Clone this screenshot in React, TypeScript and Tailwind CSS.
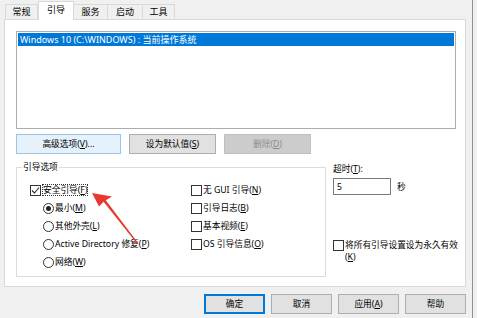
import type { ReactNode } from "react";

function Key({ k }: { k: string }) {
  return <span className="underline">{k}</span>;
}

function Box({ checked = false }: { checked?: boolean }) {
  return (
    <span className="mr-px flex h-[11px] w-[11px] shrink-0 items-center justify-center border border-[#333] bg-white">
      {checked && (
        <svg width="9" height="9" viewBox="0 0 9 9">
          <path d="M1 4.5 3.5 7 8 1.5" fill="none" stroke="#222" strokeWidth="1.1" />
        </svg>
      )}
    </span>
  );
}

function Radio({ on = false }: { on?: boolean }) {
  return (
    <span className="mr-px flex h-[11px] w-[11px] shrink-0 items-center justify-center rounded-full border border-[#333] bg-white">
      {on && <span className="h-[5px] w-[5px] rounded-full bg-[#222]" />}
    </span>
  );
}

function Row({ children }: { children: ReactNode }) {
  return <div className="flex h-[18px] items-center whitespace-nowrap">{children}</div>;
}

function Btn({ children, w, kind = "normal" }: { children: ReactNode; w: string; kind?: "normal" | "hover" | "disabled" | "default" }) {
  const look = {
    normal: "bg-[#e1e1e1] border-[#adadad] text-black",
    hover: "bg-[#e5f1fb] border-[#9cc3e6] text-black",
    disabled: "bg-[#cccccc] border-[#bfbfbf] text-[#8d8d8d]",
    default: "bg-[#e1e1e1] border-[#0078d7] text-black shadow-[inset_0_0_0_1px_#0078d7]",
  }[kind];
  return (
    <div className={`flex h-[20px] ${w} items-center justify-center border ${look}`}>{children}</div>
  );
}

const tabs = [
  { name: "常规", w: "w-[33px]" },
  { name: "引导", w: "w-[36px]", active: true },
  { name: "服务", w: "w-[34px]" },
  { name: "启动", w: "w-[35px]" },
  { name: "工具", w: "w-[32px]" },
];

export default function App() {
  return (
    <div className="relative h-[318px] w-[477px] overflow-hidden bg-[#f0f0f0] font-['Noto_Sans','Noto_Sans_CJK_SC',sans-serif] text-[8.7px] leading-[12px] text-black">
      <div className="h-[318px] w-[473px] border-r border-[#8f8f8f]">
        {/* tabs */}
        <div className="flex h-[19px] items-end pl-[5px] text-[9px]">
          {tabs.map((t) =>
            t.active ? (
              <div
                key={t.name}
                className={`relative z-10 -mb-px flex h-[19px] ${t.w} items-center justify-center border border-b-0 border-[#d9d9d9] bg-white pb-[2px]`}
              >
                {t.name}
              </div>
            ) : (
              <div
                key={t.name}
                className={`flex h-[15px] ${t.w} items-center justify-center border border-b-0 border-l-0 border-[#d9d9d9] bg-[#f0f0f0] first:border-l`}
              >
                {t.name}
              </div>
            )
          )}
        </div>

        {/* panel */}
        <div className="ml-[4px] h-[268px] w-[462px] border border-[#d9d9d9] bg-white pl-[11px] pt-[11px]">
          <div className="h-[98px] w-[440px] border border-[#adadad] bg-white p-px">
            <div className="flex h-[13px] items-center bg-[#0078d7] pl-[2px] text-[9px] text-white">
              Windows 10 (C:\WINDOWS) : 当前操作系统
            </div>
          </div>

          <div className="mt-[5px] flex gap-[8px]">
            <Btn w="w-[105px]" kind="hover">
              高级选项(<Key k="V" />)...
            </Btn>
            <Btn w="w-[87px]">
              设为默认值(<Key k="S" />)
            </Btn>
            <Btn w="w-[87px]" kind="disabled">
              删除(<Key k="D" />)
            </Btn>
          </div>

          <div className="mt-[7px] flex">
            <fieldset className="h-[116px] w-[310px] border border-[#dcdcdc]">
              <legend className="ml-[5px] px-px leading-[12px]">引导选项</legend>
              <div className="flex pl-[13px] pt-[8px]">
                <div className="w-[161px]">
                  <Row>
                    <Box checked />
                    <span className="border border-dotted border-[#333] leading-[10px]">
                      安全引导(<Key k="F" />)
                    </span>
                  </Row>
                  <div className="pl-[13px]">
                    <Row>
                      <Radio on />
                      最小(<Key k="M" />)
                    </Row>
                    <Row>
                      <Radio />
                      其他外壳(<Key k="L" />)
                    </Row>
                    <Row>
                      <Radio />
                      Active Directory 修复(<Key k="P" />)
                    </Row>
                    <Row>
                      <Radio />
                      网络(<Key k="W" />)
                    </Row>
                  </div>
                </div>
                <div>
                  <Row>
                    <Box />
                    无 GUI 引导(<Key k="N" />)
                  </Row>
                  <Row>
                    <Box />
                    引导日志(<Key k="B" />)
                  </Row>
                  <Row>
                    <Box />
                    基本视频(<Key k="E" />)
                  </Row>
                  <Row>
                    <Box />
                    OS 引导信息(<Key k="O" />)
                  </Row>
                </div>
              </div>
            </fieldset>

            <div className="ml-[7px] flex flex-col pt-[2px]">
              <div>
                超时(<Key k="T" />):
              </div>
              <div className="mt-[3px] flex items-center">
                <div className="flex h-[17px] w-[58px] items-center border border-[#7a7a7a] bg-white pl-[3px]">5</div>
                <span className="ml-[6px]">秒</span>
              </div>
              <div className="mt-[44px] flex items-start">
                <span className="mt-px">
                  <Box />
                </span>
                <span className="whitespace-nowrap">
                  将所有引导设置设为永久有效
                  <br />
                  (<Key k="K" />)
                </span>
              </div>
            </div>
          </div>
        </div>

        {/* dialog buttons */}
        <div className="mt-[7px] flex justify-end gap-[6px] pr-[6px]">
          <Btn w="w-[61px]" kind="default">
            确定
          </Btn>
          <Btn w="w-[61px]">取消</Btn>
          <Btn w="w-[61px]">
            应用(<Key k="A" />)
          </Btn>
          <Btn w="w-[61px]">帮助</Btn>
        </div>
      </div>

      {/* red annotation arrow */}
      <svg className="pointer-events-none absolute left-0 top-0" width="477" height="318">
        <polygon
          points="92,193 112,196.5 105.8,200.2 138.6,243.8 137.6,244.4 103.6,201.8 99,206.5"
          fill="#e8392e"
        />
      </svg>
    </div>
  );
}
